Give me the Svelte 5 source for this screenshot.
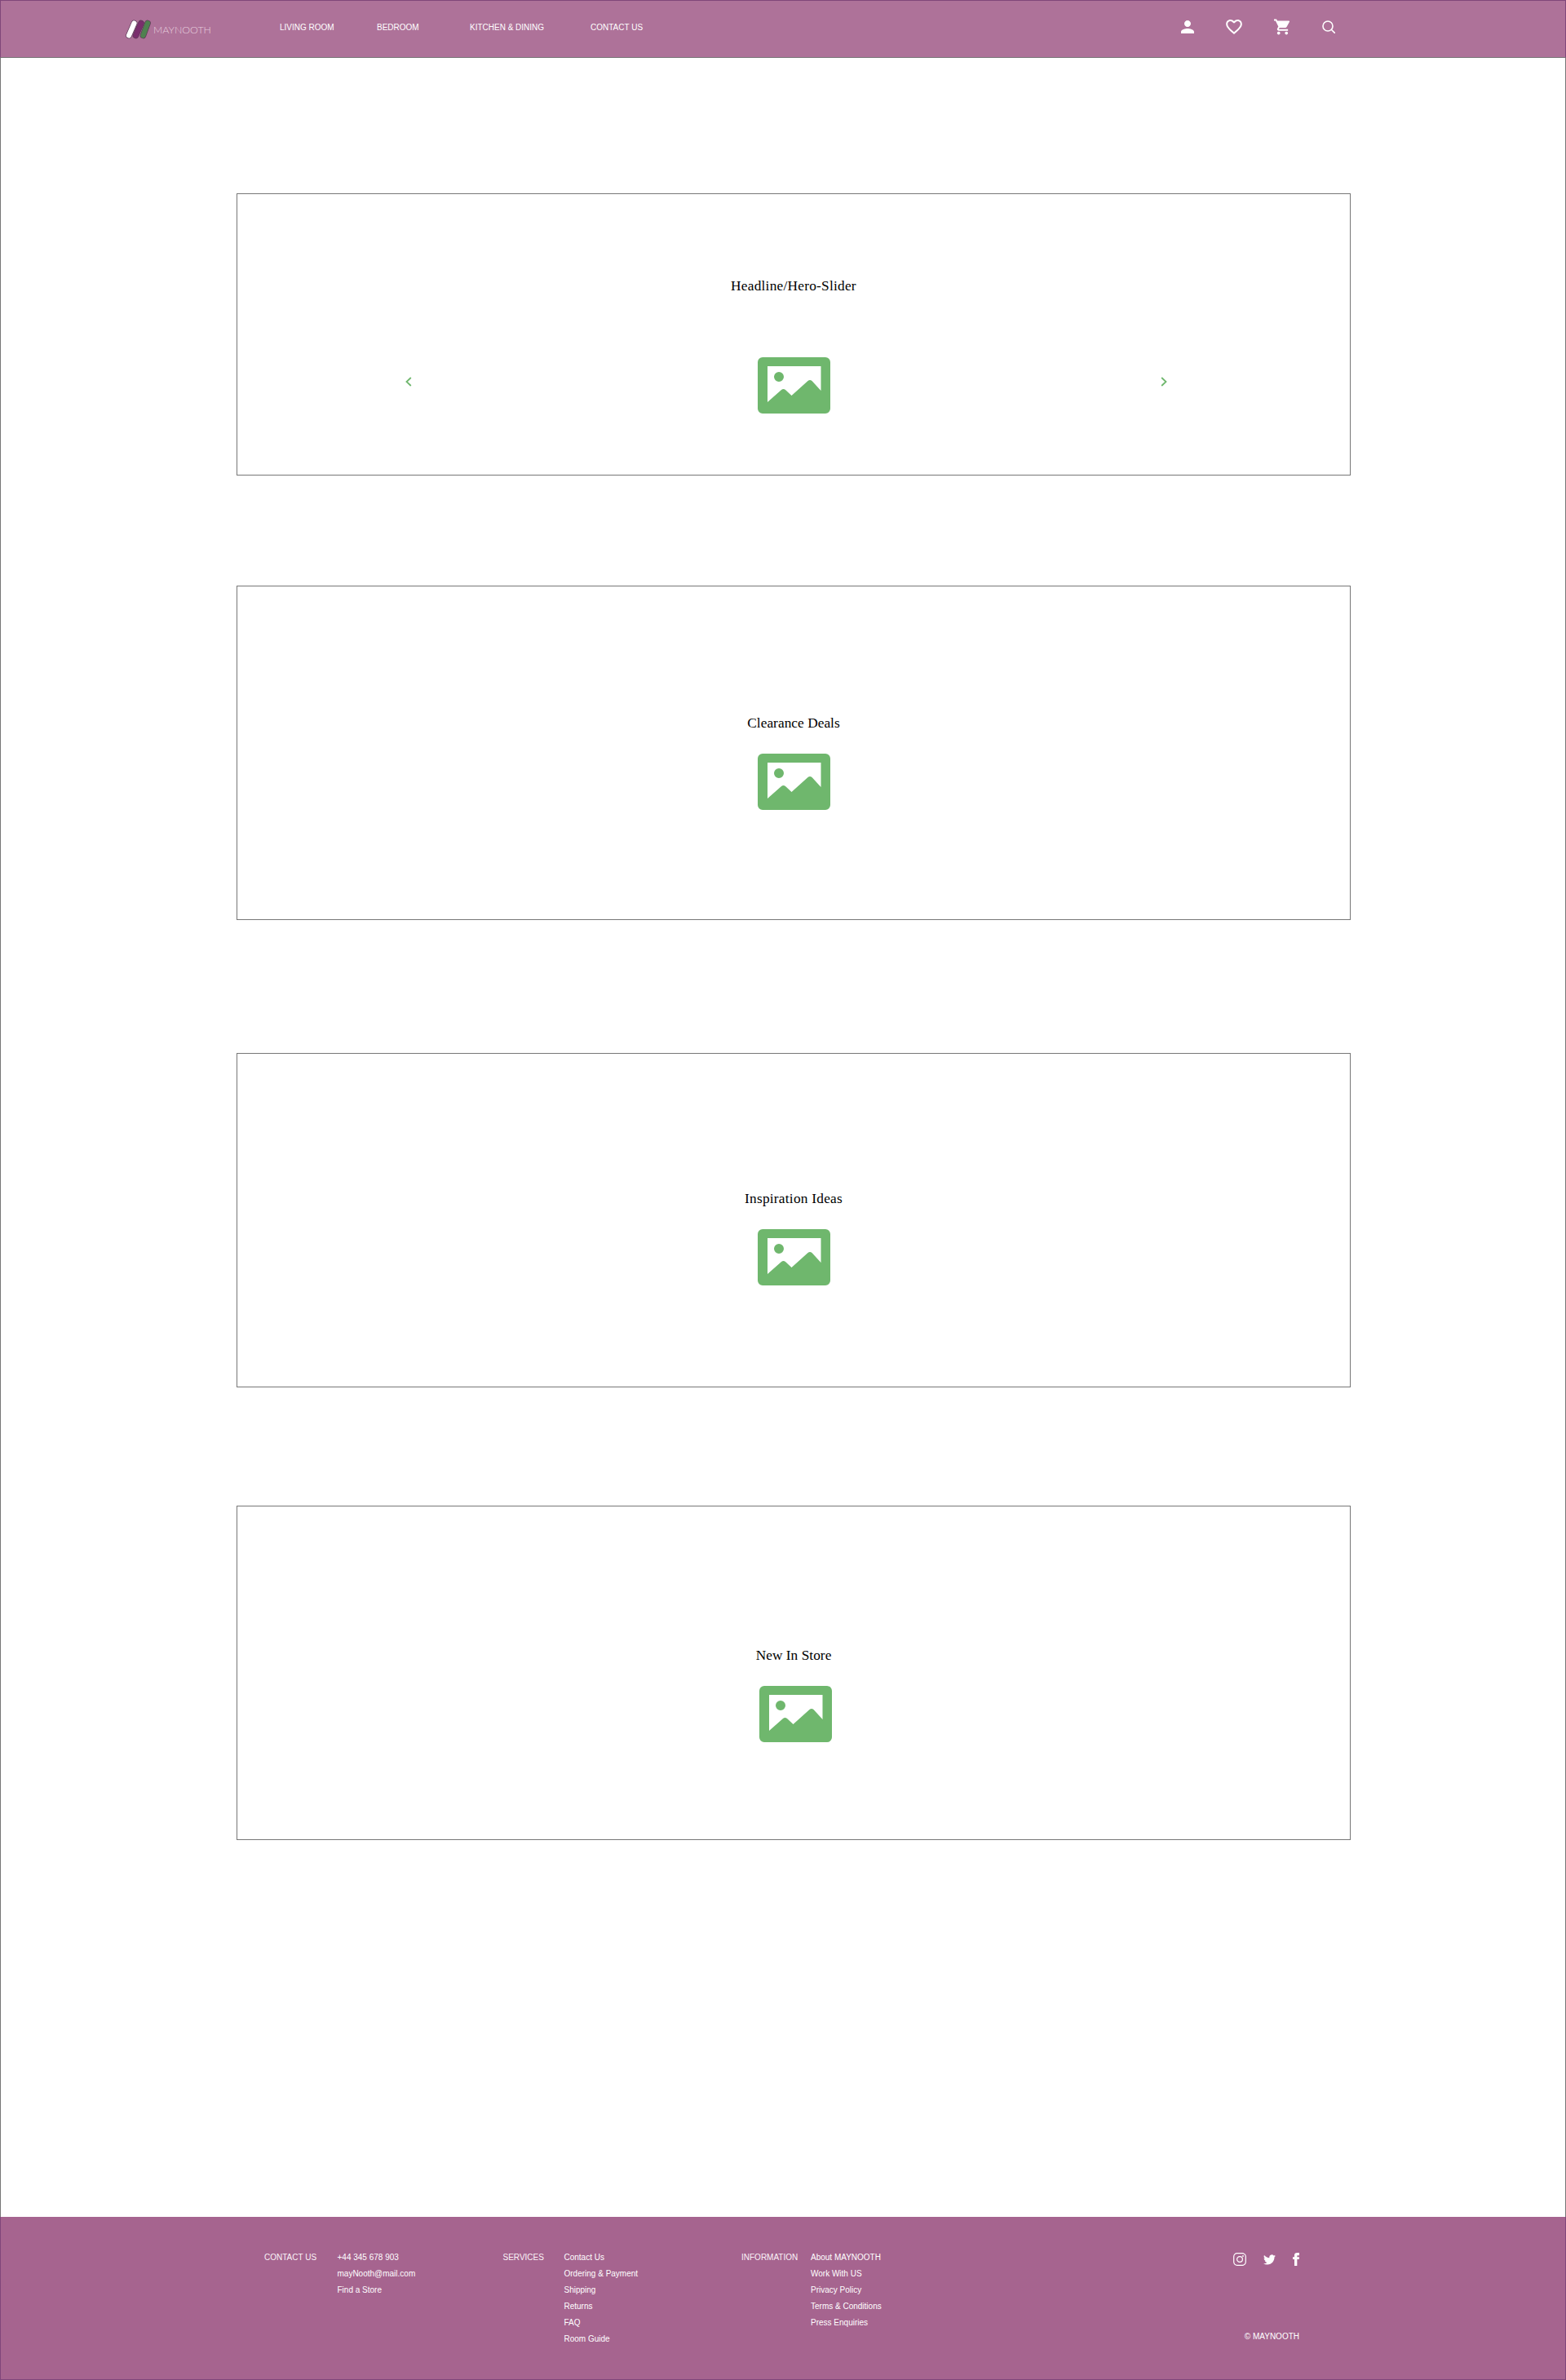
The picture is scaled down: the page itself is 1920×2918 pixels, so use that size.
<script lang="ts">
  const nav = ['LIVING ROOM', 'BEDROOM', 'KITCHEN & DINING', 'CONTACT US'];

  const sections = [
    { title: 'Clearance Deals', cls: 'deals' },
    { title: 'Inspiration Ideas', cls: 'ideas' },
    { title: 'New In Store', cls: 'fresh' }
  ];

  const footerGroups = [
    { label: 'CONTACT US', width: 89.5, links: ['+44 345 678 903', 'mayNooth@mail.com', 'Find a Store'] },
    { label: 'SERVICES', width: 75, links: ['Contact Us', 'Ordering & Payment', 'Shipping', 'Returns', 'FAQ', 'Room Guide'] },
    { label: 'INFORMATION', width: 85, links: ['About MAYNOOTH', 'Work With US', 'Privacy Policy', 'Terms & Conditions', 'Press Enquiries'] }
  ];

  const pills = [
    { x1: 10.5, x2: 4, color: '#fff' },
    { x1: 19, x2: 12.5, color: '#7a2e6d' },
    { x1: 27, x2: 21.5, color: '#4f8150' }
  ];
</script>

{#snippet picture()}
  <svg class="picture" viewBox="0 0 89 69" aria-hidden="true">
    <path fill-rule="evenodd" d="M6 0h77a6 6 0 0 1 6 6v57a6 6 0 0 1-6 6H6a6 6 0 0 1-6-6V6a6 6 0 0 1 6-6zM12 11v44l17-15q2.500-2 5 0l7.500 7 20-18q2.500-2 5 0l11 12V11zM32 24a6 6 0 1 0-12 0 6 6 0 0 0 12 0z" />
  </svg>
{/snippet}

<div class="page">
  <header class="topbar">
    <a class="logo" href="#home">
      <svg class="mark" viewBox="0 0 30 22" aria-hidden="true">
        {#each pills as pill}
          <line class="pill-edge" x1={pill.x1} y1="3.500" x2={pill.x2} y2="18.500" />
          <line class="pill" x1={pill.x1} y1="3.500" x2={pill.x2} y2="18.500" stroke={pill.color} />
        {/each}
      </svg>
      <span>MAYNOOTH</span>
    </a>
    <nav class="nav">
      {#each nav as item}
        <a href="#nav">{item}</a>
      {/each}
    </nav>
    <div class="tools">
      <svg width="16" height="16" viewBox="4 4 16 16" aria-label="Account"><path d="M12 12c2.200 0 4-1.800 4-4s-1.800-4-4-4-4 1.800-4 4 1.800 4 4 4zm0 2c-2.700 0-8 1.300-8 4v2h16v-2c0-2.700-5.300-4-8-4z" /></svg>
      <svg width="20" height="18" viewBox="2 3 20 18.350" aria-label="Wishlist"><path d="M16.500 3c-1.740 0-3.410.810-4.500 2.090C10.910 3.810 9.240 3 7.500 3 4.420 3 2 5.420 2 8.500c0 3.780 3.400 6.860 8.550 11.540L12 21.350l1.450-1.320C18.600 15.360 22 12.280 22 8.500 22 5.420 19.580 3 16.500 3zm-4.400 15.550l-.1.100-.1-.1C7.140 14.240 4 11.390 4 8.500 4 6.500 5.500 5 7.500 5c1.540 0 3.040.990 3.570 2.360h1.870C13.460 5.990 14.960 5 16.500 5c2 0 3.500 1.500 3.500 3.500 0 2.890-3.140 5.740-7.900 10.050z" /></svg>
      <svg width="20" height="20" viewBox="1 2 21 20" aria-label="Cart"><path d="M7 18c-1.100 0-1.990.900-1.990 2S5.900 22 7 22s2-.900 2-2-.900-2-2-2zM1 2v2h2l3.600 7.590-1.350 2.450c-.160.280-.250.610-.250.960 0 1.100.900 2 2 2h12v-2H7.420c-.140 0-.250-.110-.250-.250l.030-.120.900-1.630h7.450c.750 0 1.410-.410 1.750-1.030l3.580-6.490c.080-.140.120-.310.120-.480 0-.550-.450-1-1-1H5.210l-.940-2H1zm16 16c-1.100 0-1.990.900-1.990 2s.890 2 1.990 2 2-.900 2-2-.900-2-2-2z" /></svg>
      <svg class="search" width="16" height="16" viewBox="0 0 16 16" aria-label="Search"><circle cx="7" cy="7" r="6" /><line x1="11.500" y1="11.500" x2="15.500" y2="15.500" /></svg>
    </div>
  </header>

  <main class="content">
    <section class="card hero">
      <h2>Headline/Hero-Slider</h2>
      {@render picture()}
      <svg class="arrow prev" viewBox="0 0 8 12" aria-hidden="true"><path d="M6.800 1 1.500 6l5.300 5" /></svg>
      <svg class="arrow next" viewBox="0 0 8 12" aria-hidden="true"><path d="M1.200 1 6.500 6l-5.300 5" /></svg>
    </section>

    {#each sections as section}
      <section class="card {section.cls}">
        <h2>{section.title}</h2>
        {@render picture()}
      </section>
    {/each}
  </main>

  <footer class="footer">
    {#each footerGroups as group}
      <div class="group">
        <span class="label" style="width: {group.width}px">{group.label}</span>
        <ul>
          {#each group.links as link}
            <li>{link}</li>
          {/each}
        </ul>
      </div>
    {/each}
    <div class="aside">
      <div class="social">
        <svg class="insta" width="16" height="16" viewBox="0 0 16 16" aria-label="Instagram"><rect x=".7" y=".7" width="14.600" height="14.600" rx="4" /><circle cx="8" cy="8" r="3.400" /><circle class="dot" cx="12" cy="4" r=".9" /></svg>
        <svg width="15" height="13" viewBox="0 0 24 20" aria-label="Twitter"><path d="M23.950 2.570a10 10 0 0 1-2.820.770 4.960 4.960 0 0 0 2.160-2.720c-.950.550-2 .960-3.120 1.190a4.920 4.920 0 0 0-8.380 4.480C7.690 6.100 4.070 4.130 1.640 1.160a4.820 4.820 0 0 0-.670 2.480c0 1.710.870 3.200 2.190 4.100a4.900 4.900 0 0 1-2.230-.610v.060c0 2.380 1.700 4.370 3.950 4.820a5 5 0 0 1-2.210.080 4.940 4.940 0 0 0 4.600 3.420A9.870 9.870 0 0 1 0 17.540a14 14 0 0 0 7.560 2.210c9.050 0 14-7.500 14-13.980 0-.210 0-.420-.020-.630a9.940 9.940 0 0 0 2.410-2.570z" /></svg>
        <svg width="8" height="16" viewBox="6 0 12 24" aria-label="Facebook"><path d="M9 8H6v4h3v12h5V12h3.640L18 8h-4V6.330C14 5.380 14.200 5 15.120 5H18V0h-3.800C10.600 0 9 1.580 9 4.610V8z" /></svg>
      </div>
      <p class="copy">© MAYNOOTH</p>
    </div>
  </footer>
</div>

<style>
  :global(body) { margin: 0; background: #fff; }

  .page {
    width: 1920px;
    height: 2918px;
    box-sizing: border-box;
    display: flex;
    flex-direction: column;
    font-family: "Liberation Sans", Arial, sans-serif;
    color: #fff;
    border-left: 1px solid #777;
    border-right: 1px solid #777;
  }

  .topbar {
    height: 71px;
    box-sizing: border-box;
    margin: 0 -1px;
    display: flex;
    align-items: flex-start;
    padding: 24px 282px 0 154px;
    background: #ae7299;
    border: 1px solid #80467a;
    border-bottom-color: #777;
  }
  .logo {
    display: flex;
    align-items: center;
    gap: 4px;
    width: 189px;
    height: 22px;
    margin: 0 0 0 -1px;
    color: #e6cfdf;
    font-family: Lato, "Liberation Sans", sans-serif;
    font-weight: 300;
    font-size: 12.400px;
    text-decoration: none;
  }
  .mark { width: 30px; height: 22px; flex: none; overflow: visible; }
  .pill-edge { stroke: #5d3a58; stroke-width: 7.600px; stroke-linecap: round; }
  .pill { stroke-width: 6.200px; stroke-linecap: round; }

  .nav {
    display: grid;
    grid-template-columns: 119px 114px 148px auto;
    margin-top: 3px;
    line-height: 11px;
    font-size: 10px;
  }
  .nav a { color: #fff; text-decoration: none; }

  .tools {
    margin-left: auto;
    display: flex;
    align-items: center;
    gap: 39px;
    height: 20px;
    margin-top: -2px;
  }
  .tools svg { fill: #fff; display: block; }
  .tools .search { fill: none; stroke: #fff; stroke-width: 1.600; stroke-linecap: round; }

  .content {
    flex: 1;
    padding: 166px 263px 0 289px;
  }
  .card {
    height: 346px;
    box-sizing: border-box;
    border: 1px solid #777;
    background: #fff;
    display: flex;
    flex-direction: column;
    align-items: center;
    justify-content: center;
    position: relative;
    color: #000;
  }
  h2 {
    margin: 0;
    font-family: "Liberation Serif", "Times New Roman", serif;
    font-size: 17.300px;
    letter-spacing: 0.05px;
    line-height: 22px;
    font-weight: 400;
  }
  .picture { display: block; width: 89px; height: 69px; fill: #6fb76d; }

  .hero { height: 346px; justify-content: flex-start; padding-top: 102px; margin-bottom: 135px; }
  .hero .picture { margin-top: 76px; }
  .hero h2, .ideas h2 { letter-spacing: 0.25px; }

  .deals, .ideas, .fresh { height: 410px; }
  .deals .picture, .ideas .picture, .fresh .picture { margin-top: 26px; }
  .deals { margin-bottom: 163px; padding-top: 23px; }
  .ideas { margin-bottom: 145px; padding-top: 43px; }
  .fresh { padding-top: 53px; }
  .fresh .picture { margin-left: 4px; }

  .arrow {
    position: absolute;
    top: 224px;
    width: 8px;
    height: 12px;
    fill: none;
    stroke: #6fb76d;
    stroke-width: 1.800;
  }
  .prev { left: 206px; }
  .next { left: 1132px; }

  .footer {
    height: 200px;
    box-sizing: border-box;
    margin: 0 -1px;
    display: flex;
    padding: 40px 326px 0 323px;
    background: #a6648f;
    border: 1px solid #80467a;
    border-top: 0;
    font-size: 10px;
    line-height: 20px;
  }
  .group { display: flex; width: 292.500px; flex: none; }
  .label { flex: none; color: #fbf3f8; }
  ul { list-style: none; margin: 0; padding: 0; }

  .aside {
    margin-left: auto;
    display: flex;
    flex-direction: column;
    align-items: flex-end;
  }
  .social {
    display: flex;
    align-items: center;
    gap: 21px;
    height: 16px;
    margin-top: 4px;
  }
  .social svg { display: block; fill: #fff; }
  .social .insta { fill: none; stroke: #fff; stroke-width: 1.200; }
  .social .insta .dot { fill: #fff; stroke: none; }
  .copy { margin: 77px 0 0; }
</style>
